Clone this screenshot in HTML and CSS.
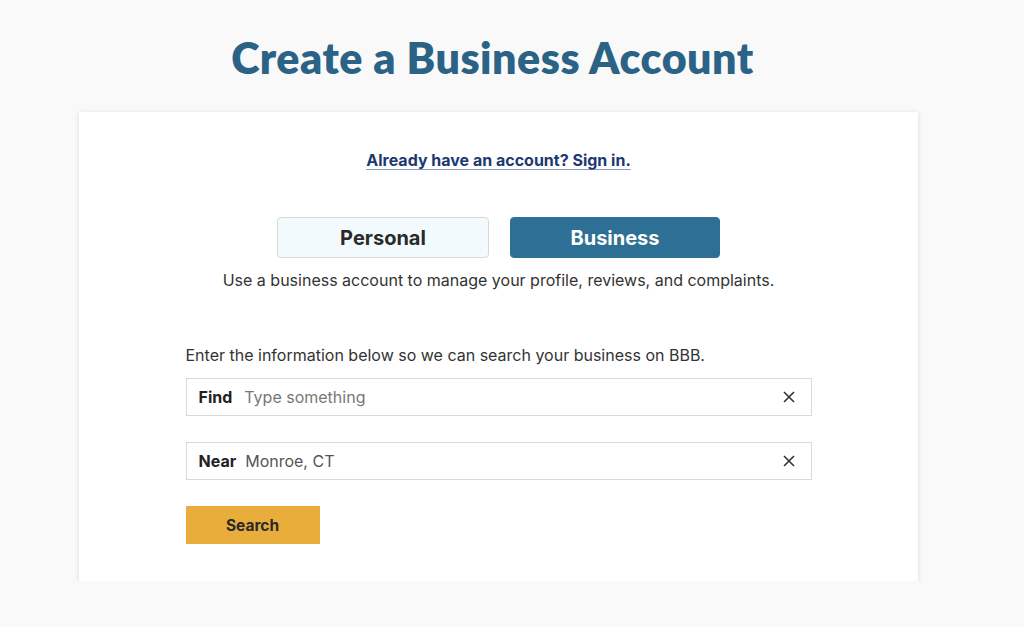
FILE: index.html
```html
<!DOCTYPE html>
<html lang="en">
<head>
<meta charset="utf-8">
<title>Create a Business Account</title>
<link rel="stylesheet" href="styles.css">
</head>
<body>
<main class="page">
  <h1 class="title">Create a Business Account</h1>
  <section class="card">
    <a class="signin" href="#">Already have an account? Sign in.</a>
    <div class="toggle">
      <button class="tab tab-personal" type="button">Personal</button>
      <button class="tab tab-business" type="button">Business</button>
    </div>
    <p class="desc">Use a business account to manage your profile, reviews, and complaints.</p>
    <div class="form">
      <p class="intro">Enter the information below so we can search your business on BBB.</p>
      <label class="field">
        <span class="field-label">Find</span>
        <span class="field-value placeholder">Type something</span>
        <svg class="clear" viewBox="0 0 12 12" width="12" height="12" aria-hidden="true"><path d="M1 1L11 11M11 1L1 11" stroke="#333" stroke-width="1.6" fill="none"/></svg>
      </label>
      <label class="field field-near">
        <span class="field-label">Near</span>
        <span class="field-value">Monroe, CT</span>
        <svg class="clear" viewBox="0 0 12 12" width="12" height="12" aria-hidden="true"><path d="M1 1L11 11M11 1L1 11" stroke="#333" stroke-width="1.6" fill="none"/></svg>
      </label>
      <button class="search" type="button">Search</button>
    </div>
  </section>
</main>
</body>
</html>
```

FILE: styles.css
```css
* { box-sizing: border-box; }
html, body { margin: 0; padding: 0; }
body {
  background: #f9f9f9;
  font-family: "Inter", "Liberation Sans", sans-serif;
  color: #333;
}
.page {
  width: 839px;
  margin-left: 79px;
  padding-top: 30px;
}
.title {
  margin: 0 0 26px;
  padding-right: 12px;
  text-align: center;
  font-family: "Lato", "Liberation Sans", sans-serif;
  font-size: 43px;
  line-height: 56px;
  font-weight: 800;
  color: #2b6387;
  letter-spacing: 0.5px;
}
.card {
  background: #fff;
  box-shadow: 0 1px 5px rgba(0,0,0,0.13);
  padding: 38px 0 37px;
  display: flex;
  flex-direction: column;
  align-items: center;
}
.signin {
  font-size: 16px;
  line-height: 20px;
  font-weight: 700;
  color: #1d3970;
  text-decoration: underline;
  text-decoration-color: #8a9bbd;
  text-underline-offset: 3px;
}
.toggle {
  display: flex;
  gap: 21px;
  margin-top: 47px;
}
.tab {
  width: 212px;
  height: 41px;
  border-radius: 4px;
  font-family: inherit;
  font-size: 20px;
  font-weight: 700;
  cursor: pointer;
}
.tab-personal {
  background: #f2fafd;
  border: 1.5px solid #d8d8d8;
  color: #2a2a2a;
}
.tab-business {
  width: 210px;
  background: #2e6f95;
  border: 1px solid #2e6f95;
  color: #fff;
}
.desc {
  margin: 11px 0 0;
  font-size: 16px;
  line-height: 22px;
  color: #333;
}
.form {
  width: 626px;
  margin-top: 53px;
  display: flex;
  flex-direction: column;
  align-items: flex-start;
}
.intro {
  margin: 0 0 12px;
  font-size: 16px;
  line-height: 22px;
  color: #333;
}
.field {
  width: 100%;
  height: 38px;
  border: 1.5px solid #d9d9d9;
  background: #fff;
  display: flex;
  align-items: center;
  padding: 0 16px 0 12px;
  font-size: 16px;
}
.field-near { margin-top: 26px; }
.field-label {
  font-weight: 700;
  color: #222;
  margin-right: 12px;
}
.field-near .field-label { margin-right: 9px; }
.field-value {
  flex: 1;
  color: #555;
}
.field-value.placeholder { color: #777; }
.clear { flex: none; }
.search {
  margin-top: 26px;
  width: 134px;
  height: 38px;
  background: #e9ad3c;
  border: none;
  font-family: inherit;
  font-size: 15.5px;
  font-weight: 700;
  color: #2a2a2a;
  cursor: pointer;
}
```
